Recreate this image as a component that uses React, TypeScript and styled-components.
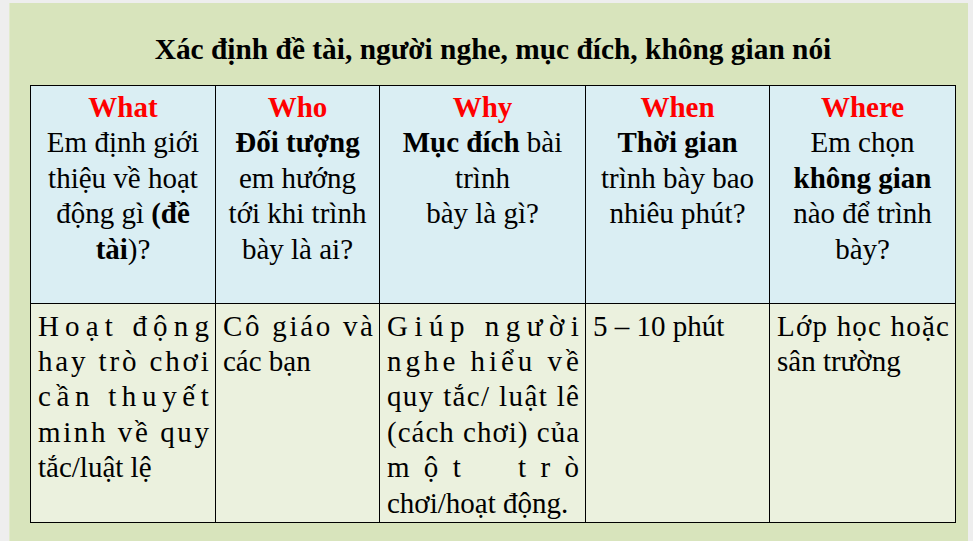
import { ReactNode } from 'react';
import styled, { createGlobalStyle } from 'styled-components';

const GlobalStyle = createGlobalStyle`
  html, body {
    margin: 0;
    padding: 0;
    background: #eeeeee;
    overflow: hidden;
  }
  body {
    font-family: "Liberation Serif", "Times New Roman", serif;
    color: #000;
  }
`;

const Page = styled.div`
  width: 973px;
  height: 541px;
  padding: 3px 5px 0 9px;
  box-sizing: border-box;
`;

const Slide = styled.section`
  height: 100%;
  background: #d8e4bc;
  border-left: 1px solid #e2ebcd;
  box-sizing: border-box;
  padding: 28px 0 0 20px;
`;

const Title = styled.h1`
  margin: 0 0 18px;
  width: 926px;
  text-align: center;
  font-size: 29.4px;
  line-height: 36px;
  font-weight: 700;
`;

const Table = styled.div`
  display: grid;
  grid-template-columns: 184px 163px 205px 183px 185px;
  grid-template-rows: 217px 218px;
  gap: 1px;
  width: fit-content;
  background: #000;
  border: 1px solid #000;
`;

const HeadCell = styled.div`
  background: #daeef3;
  padding-top: 4px;
  text-align: center;
  font-size: 29px;
  line-height: 35.4px;
`;

const BodyCell = styled.div`
  background: #ebf1de;
  padding: 4.5px 6px 0 7px;
  font-size: 29px;
  line-height: 35.4px;
`;

const Label = styled.div`
  color: #ff0000;
  font-weight: 700;
`;

const Line = styled.div`
  white-space: nowrap;
`;

const SpreadLine = styled.div`
  display: flex;
  justify-content: space-between;
  white-space: pre;
`;

const Char = styled.span`
  white-space: pre;
`;

function Spread({ text }: { text: string }) {
  return (
    <SpreadLine>
      {Array.from(text.normalize('NFC')).map((c, i) => (
        <Char key={i}>{c}</Char>
      ))}
    </SpreadLine>
  );
}

const heads: { label: string; lines: ReactNode[] }[] = [
  {
    label: 'What',
    lines: [
      'Em định giới',
      'thiệu về hoạt',
      <>
        động gì <b>(đề</b>
      </>,
      <>
        <b>tài</b>)?
      </>,
    ],
  },
  {
    label: 'Who',
    lines: [<b>Đối tượng</b>, 'em hướng', 'tới khi trình', 'bày là ai?'],
  },
  {
    label: 'Why',
    lines: [
      <>
        <b>Mục đích</b> bài
      </>,
      'trình',
      'bày là gì?',
    ],
  },
  {
    label: 'When',
    lines: [<b>Thời gian</b>, 'trình bày bao', 'nhiêu phút?'],
  },
  {
    label: 'Where',
    lines: ['Em chọn', <b>không gian</b>, 'nào để trình', 'bày?'],
  },
];

// spread = PowerPoint "distributed" line, last line of each cell stays plain
const bodies: { text: string; spread?: boolean }[][] = [
  [
    { text: 'Hoạt động', spread: true },
    { text: 'hay trò chơi', spread: true },
    { text: 'cần thuyết', spread: true },
    { text: 'minh về quy', spread: true },
    { text: 'tắc/luật lệ' },
  ],
  [{ text: 'Cô giáo và', spread: true }, { text: 'các bạn' }],
  [
    { text: 'Giúp người', spread: true },
    { text: 'nghe hiểu về', spread: true },
    { text: 'quy tắc/ luật lê', spread: true },
    { text: '(cách chơi) của', spread: true },
    { text: 'một  trò', spread: true },
    { text: 'chơi/hoạt động.' },
  ],
  [{ text: '5 – 10 phút' }],
  [{ text: 'Lớp học hoặc', spread: true }, { text: 'sân trường' }],
];

export default function App() {
  return (
    <>
      <GlobalStyle />
      <Page>
        <Slide>
          <Title>Xác định đề tài, người nghe, mục đích, không gian nói</Title>
          <Table>
            {heads.map(h => (
              <HeadCell key={h.label}>
                <Label>{h.label}</Label>
                {h.lines.map((l, i) => (
                  <Line key={i}>{l}</Line>
                ))}
              </HeadCell>
            ))}
            {bodies.map((cell, ci) => (
              <BodyCell key={ci}>
                {cell.map((l, i) =>
                  l.spread ? (
                    <Spread key={i} text={l.text} />
                  ) : (
                    <Line key={i}>{l.text}</Line>
                  )
                )}
              </BodyCell>
            ))}
          </Table>
        </Slide>
      </Page>
    </>
  );
}
